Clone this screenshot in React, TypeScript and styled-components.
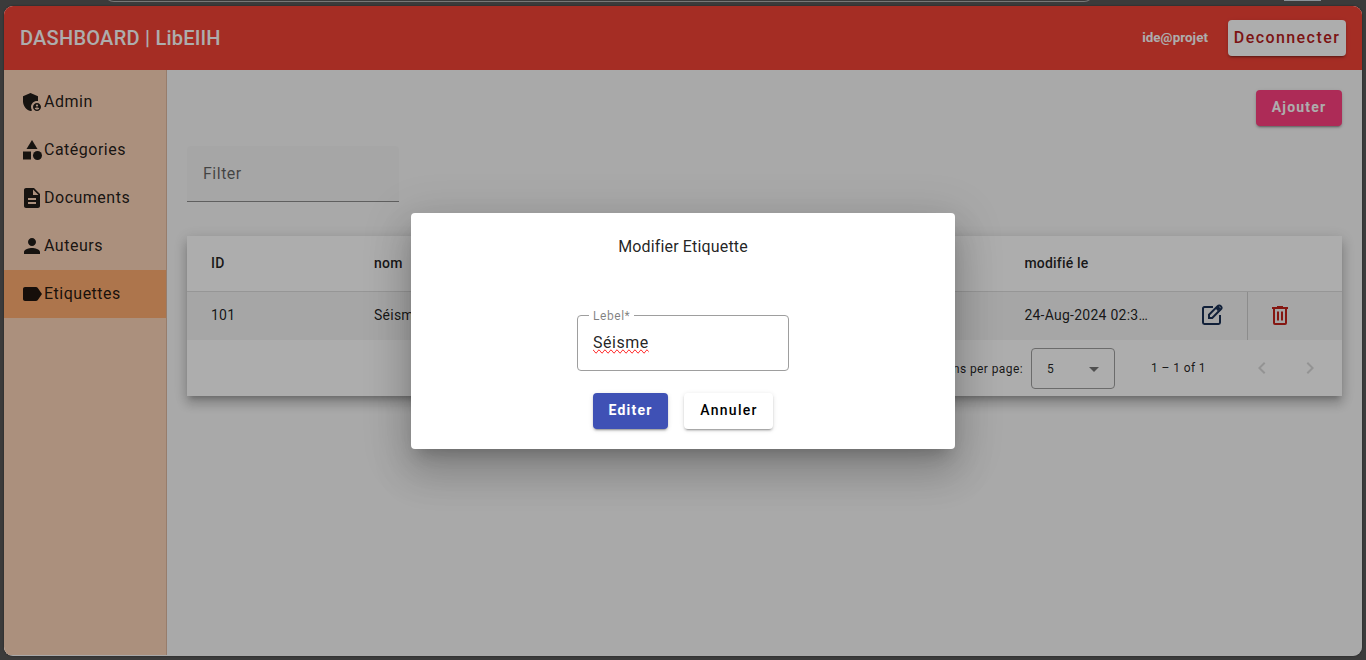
import React from "react";
import styled, { createGlobalStyle, css } from "styled-components";
import {
  MdAdminPanelSettings,
  MdCategory,
  MdDescription,
  MdPerson,
  MdLabel,
  MdChevronLeft,
  MdChevronRight,
} from "react-icons/md";

const GlobalStyle = createGlobalStyle`
  * { box-sizing: border-box; }
  body {
    margin: 0;
    overflow: hidden;
    background: #3b3b3b;
    font-family: Roboto, "Liberation Sans", sans-serif;
    color: rgba(0, 0, 0, 0.87);
  }
  button { font-family: inherit; border: 0; }
`;

const Desktop = styled.div`
  position: relative;
  height: 660px;
  padding: 6px 4px 4px;
  background: #3b3b3b;
`;

const AddressBarEdge = styled.div`
  position: absolute;
  top: -8px;
  left: 104px;
  width: 990px;
  height: 10px;
  border: 1px solid #777;
  border-radius: 0 0 10px 10px;
`;

const TabEdge = styled.div`
  position: absolute;
  top: 0;
  left: 1284px;
  width: 37px;
  height: 1px;
  background: #8a9299;
`;

const Window = styled.div`
  position: relative;
  display: flex;
  flex-direction: column;
  height: 650px;
  border-radius: 9px;
  overflow: hidden;
  background: #fafafa;
  box-shadow: 0 0 2px rgba(0, 0, 0, 0.5);
`;

const Toolbar = styled.header`
  display: flex;
  flex: none;
  align-items: center;
  height: 64px;
  padding: 0 16px;
  background: #f44336;
  color: #fff;
`;

const Brand = styled.h1`
  margin: 0;
  flex: 1;
  font-size: 20px;
  font-weight: 500;
  line-height: 32px;
  letter-spacing: 0.25px;
`;

const UserName = styled.span`
  margin-right: 20px;
  padding-bottom: 2px;
  font-size: 13.33px;
  font-weight: 700;
  letter-spacing: 0.08px;
`;

const variants = {
  logout: css`
    width: 118px;
    background: #fff;
    color: #b71c1c;
    font-size: 16px;
    letter-spacing: 1.43px;
  `,
  accent: css`
    width: 86px;
    background: #ff4081;
    color: #fff;
    font-weight: 700;
    letter-spacing: 1.2px;
  `,
  primary: css`
    width: 75px;
    background: #3f51b5;
    color: #fff;
    font-weight: 700;
    letter-spacing: 1.2px;
  `,
  plain: css`
    width: 89px;
    padding-left: 1px;
    background: #fff;
    color: #000;
  `,
};

const RaisedButton = styled.button<{ $variant: keyof typeof variants }>`
  height: 36px;
  padding: 0 0 2px;
  border-radius: 4px;
  font-size: 14px;
  font-weight: 500;
  letter-spacing: 1.25px;
  box-shadow: 0 3px 1px -2px rgba(0, 0, 0, 0.2), 0 2px 2px rgba(0, 0, 0, 0.14),
    0 1px 5px rgba(0, 0, 0, 0.12);
  ${(p) => variants[p.$variant]}
`;

const Body = styled.div`
  display: flex;
  flex: 1;
  min-height: 0;
`;

const Sidebar = styled.nav`
  width: 163px;
  height: 585px;
  padding-top: 8px;
  border-right: 1px solid #dfb8a0;
  background: #fdd4b9;
`;

const NavItem = styled.a<{ $active?: boolean }>`
  display: flex;
  align-items: center;
  height: 48px;
  padding-left: 16px;
  font-size: 16px;
  letter-spacing: 0.5px;
  background: ${(p) => (p.$active ? "#ffad71" : "transparent")};

  svg {
    flex: none;
    width: 24px;
    height: 24px;
  }

  span {
    padding-bottom: 2px;
  }
`;

const Content = styled.main`
  flex: 1;
  padding: 20px 20px 0;
`;

const Actions = styled.div`
  display: flex;
  justify-content: flex-end;
`;

const FilterField = styled.div`
  width: 212px;
  height: 56px;
  margin-top: 20px;
  padding-left: 16px;
  border-bottom: 1px solid #8c8c8c;
  border-radius: 4px 4px 0 0;
  background: #f5f5f5;
  color: rgba(0, 0, 0, 0.6);
  font-size: 16px;
  line-height: 55px;
  letter-spacing: 0.5px;
`;

const TableCard = styled.section`
  height: 160px;
  margin-top: 34px;
  background: #fff;
  box-shadow: 0 5px 5px -3px rgba(0, 0, 0, 0.2),
    0 8px 10px 1px rgba(0, 0, 0, 0.14), 0 3px 14px 2px rgba(0, 0, 0, 0.12);
`;

const Row = styled.div<{ $head?: boolean }>`
  display: grid;
  grid-template-columns: 163px repeat(4, 162.6px) 163px 61px 1fr;
  align-items: center;
  height: ${(p) => (p.$head ? "56px" : "48px")};
  padding-left: 24px;
  border-bottom: ${(p) => (p.$head ? "1px solid #dedede" : "0")};
  background: ${(p) => (p.$head ? "#fff" : "#f5f5f5")};
  font-size: 14px;
  font-weight: ${(p) => (p.$head ? 500 : 400)};
  letter-spacing: ${(p) => (p.$head ? "0.2px" : "0.25px")};

  span {
    padding-bottom: 2px;
  }
`;

const IconCell = styled.div<{ $divided?: boolean }>`
  display: flex;
  align-items: center;
  justify-content: ${(p) => (p.$divided ? "flex-end" : "flex-start")};
  height: 100%;
  padding: ${(p) => (p.$divided ? "0 24px 2px 0" : "0 0 2px 20px")};
  border-right: ${(p) => (p.$divided ? "1px solid #cfcfcf" : "0")};
`;

const Paginator = styled.footer`
  display: flex;
  align-items: center;
  justify-content: flex-end;
  height: 56px;
  padding-right: 12px;
  font-size: 12px;
  letter-spacing: 0.4px;
`;

const PageSizeLabel = styled.span`
  padding-top: 2px;
`;

const PageSize = styled.div`
  display: flex;
  align-items: center;
  justify-content: space-between;
  width: 84px;
  height: 41px;
  margin: 0 36px 0 8px;
  padding: 2px 15px 0;
  border: 1px solid #9e9e9e;
  border-radius: 4px;
`;

const Caret = styled.span`
  border: 5px solid transparent;
  border-top-color: rgba(0, 0, 0, 0.54);
  border-bottom: 0;
`;

const PageArrows = styled.div`
  display: flex;
  gap: 24px;
  margin-left: 44px;
  padding-right: 8px;
  color: rgba(0, 0, 0, 0.15);

  svg {
    width: 24px;
    height: 24px;
    stroke: none;
  }
`;

const Backdrop = styled.div`
  position: absolute;
  inset: 0;
  background: rgba(0, 0, 0, 0.32);
`;

const Dialog = styled.div`
  position: absolute;
  top: 207px;
  left: 407px;
  display: flex;
  flex-direction: column;
  align-items: center;
  width: 544px;
  height: 236px;
  border-radius: 4px;
  background: #fff;
  box-shadow: 0 11px 15px -7px rgba(0, 0, 0, 0.2),
    0 24px 38px 3px rgba(0, 0, 0, 0.14), 0 9px 46px 8px rgba(0, 0, 0, 0.12);
`;

const DialogTitle = styled.h2`
  margin: 22px 0 0;
  font-size: 16px;
  font-weight: 400;
  line-height: 24px;
  letter-spacing: 0.15px;
`;

const OutlinedField = styled.fieldset`
  width: 212px;
  height: 63px;
  margin: 49px 0 0;
  padding: 0 15px;
  border: 1px solid #9e9e9e;
  border-radius: 4px;
`;

const FieldLabel = styled.legend`
  height: 14px;
  margin-left: -4px;
  padding: 0 4px;
  color: rgba(0, 0, 0, 0.5);
  font-size: 12px;
  line-height: 16px;
  letter-spacing: 0.55px;
`;

const FieldValue = styled.div`
  padding-top: 9px;
  font-size: 16px;
  line-height: 24px;
  letter-spacing: 0.5px;
`;

const Misspelled = styled.span`
  text-decoration: spelling-error;
`;

const DialogActions = styled.div`
  display: flex;
  gap: 16px;
  margin-top: 22px;
`;

const EditIcon = () => (
  <svg width="22" height="22" viewBox="0 0 22 22" fill="none" stroke="#1a3055" strokeWidth="2">
    <path d="M12 3H3.4A1.4 1.4 0 0 0 2 4.400V18.600A1.400 1.400 0 0 0 3.400 20H17.600A1.400 1.400 0 0 0 19 18.600V11" />
    <path d="M8 14V10.700L16.600 2.100A1.600 1.600 0 0 1 19.800 5.300L11.200 14Z" />
    <path d="M15.500 5.500L18.500 3.200" strokeWidth="4" />
  </svg>
);

const TrashIcon = () => (
  <svg width="24" height="24" viewBox="0 0 24 24" fill="none" stroke="#c5221b" strokeWidth="2">
    <path d="M4 5H20M9 4H15M6 5V20A1 1 0 0 0 7 21H17A1 1 0 0 0 18 20V5M10 8.500V17.500M14 8.500V17.500" />
  </svg>
);

const navigation = [
  { label: "Admin", Icon: MdAdminPanelSettings },
  { label: "Catégories", Icon: MdCategory },
  { label: "Documents", Icon: MdDescription },
  { label: "Auteurs", Icon: MdPerson },
  { label: "Etiquettes", Icon: MdLabel, active: true },
];

export default function App() {
  return (
    <Desktop>
      <GlobalStyle />
      <AddressBarEdge />
      <TabEdge />
      <Window>
        <Toolbar>
          <Brand>DASHBOARD | LibEIlH</Brand>
          <UserName>ide@projet</UserName>
          <RaisedButton $variant="logout">Deconnecter</RaisedButton>
        </Toolbar>
        <Body>
          <Sidebar>
            {navigation.map(({ label, Icon, active }) => (
              <NavItem key={label} $active={active}>
                <Icon />
                <span>{label}</span>
              </NavItem>
            ))}
          </Sidebar>
          <Content>
            <Actions>
              <RaisedButton $variant="accent">Ajouter</RaisedButton>
            </Actions>
            <FilterField>Filter</FilterField>
            <TableCard>
              <Row $head>
                <span>ID</span>
                <span>nom</span>
                <span />
                <span />
                <span />
                <span>modifié le</span>
              </Row>
              <Row>
                <span>101</span>
                <span>Séisme</span>
                <span />
                <span />
                <span />
                <span>24-Aug-2024 02:3…</span>
                <IconCell $divided>
                  <EditIcon />
                </IconCell>
                <IconCell>
                  <TrashIcon />
                </IconCell>
              </Row>
              <Paginator>
                <PageSizeLabel>Items per page:</PageSizeLabel>
                <PageSize>
                  5<Caret />
                </PageSize>
                <span>1 – 1 of 1</span>
                <PageArrows>
                  <MdChevronLeft />
                  <MdChevronRight />
                </PageArrows>
              </Paginator>
            </TableCard>
          </Content>
        </Body>
        <Backdrop />
        <Dialog>
          <DialogTitle>Modifier Etiquette</DialogTitle>
          <OutlinedField>
            <FieldLabel>Lebel*</FieldLabel>
            <FieldValue>
              <Misspelled>Séisme</Misspelled>
            </FieldValue>
          </OutlinedField>
          <DialogActions>
            <RaisedButton $variant="primary">Editer</RaisedButton>
            <RaisedButton $variant="plain">Annuler</RaisedButton>
          </DialogActions>
        </Dialog>
      </Window>
    </Desktop>
  );
}
